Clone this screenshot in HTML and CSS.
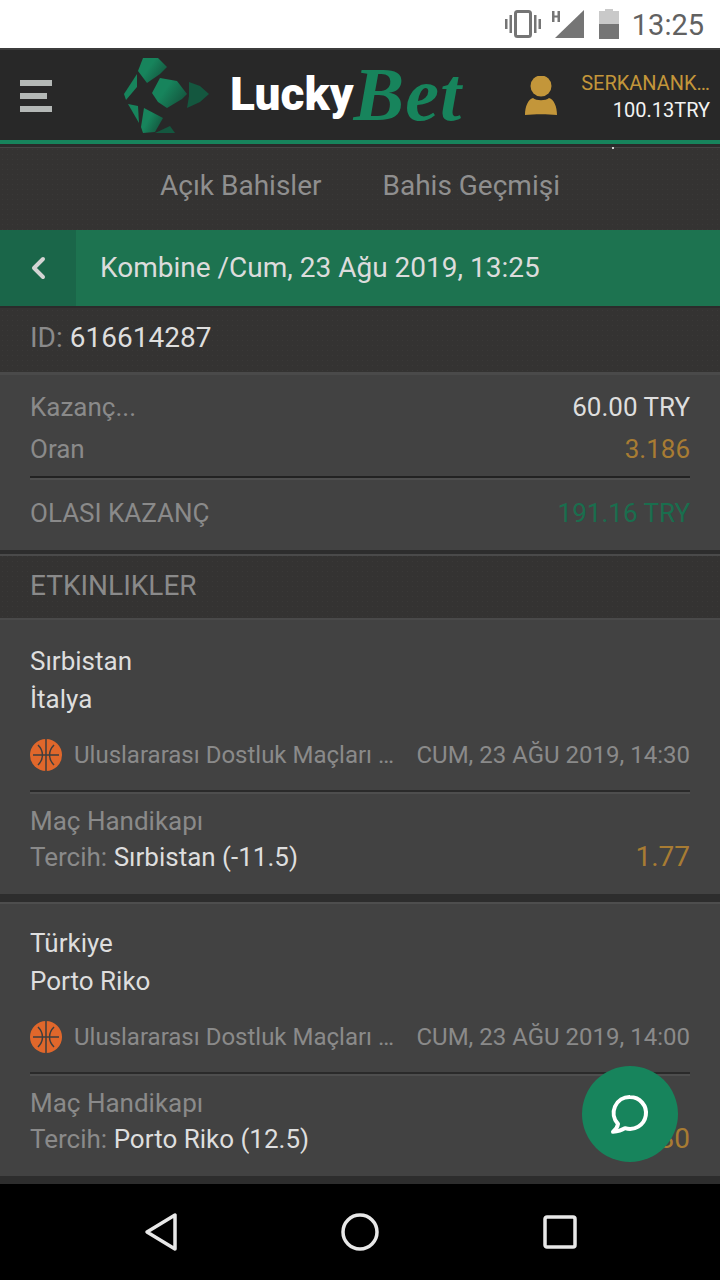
FILE: index.html
```html
<!DOCTYPE html>
<html lang="en">
<head>
  <meta charset="UTF-8">
  <meta name="viewport" content="width=device-width, initial-scale=1.0">
  <title>Kombine</title>
  <link rel="stylesheet" href="styles.css">
</head>
<body>

  <!-- Android status bar -->
  <div class="status-bar">
    <svg class="icon-vibrate" width="36" height="28" viewBox="0 0 36 28">
      <rect x="10.500" y="1.500" width="15" height="25" rx="2" fill="none" stroke="#757575" stroke-width="3"/>
      <path d="M0 9h2.500v10H0zM4.500 5H7v18H4.500zM29 5h2.500v18H29zM33.500 9H36v10h-2.500z" fill="#757575"/>
    </svg>
    <svg class="icon-signal" width="34" height="30" viewBox="0 0 34 30">
      <path d="M34 1v28H5z" fill="#757575"/>
      <path d="M2 2h2.500v4.500h3V2H10v11H7.500V8.500h-3V13H2z" fill="#757575"/>
    </svg>
    <svg class="icon-battery" width="20" height="30" viewBox="0 0 20 30">
      <path d="M6 0h8v2h6v28H0V2h6z" fill="#c9c9c9"/>
      <path d="M0 15h20v15H0z" fill="#757575"/>
    </svg>
    <span class="clock">13:25</span>
  </div>

  <!-- Header section with logo and user -->
  <header>
    <div class="menu-icon">
      <span></span>
      <span class="short"></span>
      <span></span>
    </div>
    <div class="logo">
      <svg width="86" height="76" viewBox="0 0 86 76">
        <defs>
          <linearGradient id="gemFade" x1="0" y1="0" x2="1" y2="0.6">
            <stop offset="0.45" stop-color="#17845c"/>
            <stop offset="1" stop-color="#14573f"/>
          </linearGradient>
        </defs>
        <path d="M19 0h15l9 9-7 7-13 9-9-12z" fill="url(#gemFade)"/>
        <path d="M13 16v13L2 42l-2-6z" fill="#17845c"/>
        <path d="M36 20l17 3 10 13-5 5-15 9-9-6-6-9z" fill="url(#gemFade)"/>
        <path d="M65 24l11 4 9 8-9 8-13 6 2-12z" fill="#14573f"/>
        <path d="M4 46l10 2 1 17z" fill="#17845c"/>
        <path d="M20 50l19 10-8 14-12 1-2-6z" fill="url(#gemFade)"/>
        <path d="M31 75l15-7 5 7z" fill="#14573f"/>
      </svg>
      <span class="logo-text">Lucky<em>Bet</em></span>
    </div>
    <div class="user">
      <svg class="user-icon" width="32" height="40" viewBox="0 0 32 40">
        <circle cx="16" cy="10" r="10.500" fill="#c3963a"/>
        <path d="M8 22c3 3 13 3 16 0 5 1 8 9 8 17-10-1-22-1-32 0 0-8 3-16 8-17z" fill="#c3963a"/>
      </svg>
      <div class="user-info">
        <span class="user-name">SERKANANK…</span>
        <span class="user-balance">100.13TRY</span>
      </div>
    </div>
  </header>

  <!-- Tabs -->
  <nav class="tabs">
    <span class="tab-dot"></span>
    <a href="#">Açık Bahisler</a>
    <a href="#">Bahis Geçmişi</a>
  </nav>

  <main>
    <div class="title-bar">
      <div class="back-button">
        <svg width="16" height="24" viewBox="0 0 16 24">
          <path d="M13 3L4 12l9 9" fill="none" stroke="#d4d4d4" stroke-width="4" stroke-linecap="round" stroke-linejoin="round"/>
        </svg>
      </div>
      <h1>Kombine /Cum, 23 Ağu 2019, 13:25</h1>
    </div>

    <div class="section-head id-row"><span class="muted">ID:</span> <span class="light">616614287</span></div>

    <!-- Totals -->
    <section class="summary">
      <div class="row row-first">
        <span class="muted">Kazanç...</span>
        <span class="light">60.00 TRY</span>
      </div>
      <div class="row row-odds">
        <span class="muted">Oran</span>
        <span class="gold">3.186</span>
      </div>
      <div class="row row-total">
        <span class="muted">OLASI KAZANÇ</span>
        <span class="green">191.16 TRY</span>
      </div>
    </section>

    <div class="section-head events-head"><span class="muted">ETKINLIKLER</span></div>

    <!-- Event cards -->
    <section class="event">
      <div class="team">Sırbistan</div>
      <div class="team">İtalya</div>
      <div class="event-meta">
        <svg class="ball" width="32" height="32" viewBox="0 0 32 32">
          <circle cx="16" cy="16" r="16" fill="#e0672b"/>
          <path d="M16 0v32M3 16h26M8 6c6 6 6 14 0 20M24 6c-6 6-6 14 0 20" fill="none" stroke="#3e3e3e" stroke-width="1.500"/>
        </svg>
        <span class="league">Uluslararası Dostluk Maçları …</span>
        <span class="event-date">CUM, 23 AĞU 2019, 14:30</span>
      </div>
      <div class="market">Maç Handikapı</div>
      <div class="row pick">
        <span><span class="muted">Tercih:</span> <span class="light">Sırbistan (-11.5)</span></span>
        <span class="gold odd">1.77</span>
      </div>
    </section>

    <section class="event">
      <div class="team">Türkiye</div>
      <div class="team">Porto Riko</div>
      <div class="event-meta">
        <svg class="ball" width="32" height="32" viewBox="0 0 32 32">
          <circle cx="16" cy="16" r="16" fill="#e0672b"/>
          <path d="M16 0v32M3 16h26M8 6c6 6 6 14 0 20M24 6c-6 6-6 14 0 20" fill="none" stroke="#3e3e3e" stroke-width="1.500"/>
        </svg>
        <span class="league">Uluslararası Dostluk Maçları …</span>
        <span class="event-date">CUM, 23 AĞU 2019, 14:00</span>
      </div>
      <div class="market">Maç Handikapı</div>
      <div class="row pick">
        <span><span class="muted">Tercih:</span> <span class="light">Porto Riko (12.5)</span></span>
        <span class="gold odd">1.80</span>
      </div>
    </section>
  </main>

  <!-- Floating chat button -->
  <button class="chat-button">
    <svg width="40" height="40" viewBox="0 0 40 40">
      <path d="M20 3a16 16 0 1 1-5 31.200c-3 2-7 3.300-12 3.600 2.500-2 4.500-4.500 5-7.800A16 16 0 0 1 20 3z" fill="none" stroke="#fff" stroke-width="4" stroke-linejoin="round"/>
    </svg>
  </button>

  <!-- Android navigation bar -->
  <div class="nav-bar">
    <svg width="34" height="40" viewBox="0 0 34 40">
      <path d="M32 3v34L4 20z" fill="none" stroke="#e8e8e8" stroke-width="3.500" stroke-linejoin="round"/>
    </svg>
    <svg width="40" height="40" viewBox="0 0 40 40">
      <circle cx="20" cy="20" r="17" fill="none" stroke="#e8e8e8" stroke-width="3.500"/>
    </svg>
    <svg width="34" height="34" viewBox="0 0 34 34">
      <rect x="2" y="2" width="30" height="30" rx="2" fill="none" stroke="#e8e8e8" stroke-width="3.500"/>
    </svg>
  </div>
</body>
</html>
```

FILE: styles.css
```css
/* Reset some default styles */
* {
  margin: 0;
  padding: 0;
  box-sizing: border-box;
}

body {
  font-family: Roboto, Arial, sans-serif;
  background-color: #424242;
  color: #e0e0e0;
  width: 720px;
  height: 1280px;
  overflow: hidden;
  position: relative;
  display: flex;
  flex-direction: column;
}

/* Status bar */
.status-bar {
  height: 48px;
  background-color: #fff;
  display: flex;
  align-items: center;
  justify-content: flex-end;
  padding-right: 16px;
  flex-shrink: 0;
}

.icon-vibrate {
  margin-right: 9px;
}

.icon-signal {
  margin-right: 15px;
}

.icon-battery {
  margin-right: 13px;
}

.clock {
  color: #616161;
  font-size: 29px;
  margin-top: 2px;
}

/* Header */
header {
  height: 96px;
  background-color: #282828;
  border-top: 2px solid #3c3c3c;
  border-bottom: 4px solid #17845c;
  padding: 2px 10px 0 20px;
  display: flex;
  align-items: center;
  flex-shrink: 0;
}

.menu-icon {
  width: 32px;
  display: flex;
  flex-direction: column;
  gap: 7px;
}

.menu-icon span {
  display: block;
  height: 6px;
  background-color: #b4b8b6;
}

.menu-icon .short {
  width: 27px;
}

.logo {
  display: flex;
  align-items: center;
  margin-left: 72px;
}

.logo-text {
  color: #fff;
  font-size: 46px;
  font-weight: 900;
  line-height: 1;
  margin: 0 0 4px 20px;
}

.logo-text em {
  font-family: "Liberation Serif", serif;
  font-size: 76px;
  font-weight: 700;
  line-height: 0;
  vertical-align: -10px;
  color: #17845c;
  letter-spacing: 1px;
}

.user {
  margin-left: auto;
  display: flex;
  align-items: center;
}

.user-icon {
  margin-right: 24px;
}

.user-info {
  display: flex;
  flex-direction: column;
  align-items: flex-end;
  gap: 3px;
  font-size: 20px;
}

.user-name {
  color: #c3963a;
}

.user-balance {
  color: #f2f2f2;
}

/* Tabs */
.tabs {
  height: 86px;
  background-color: #343332;
  background-image: radial-gradient(circle, #3a3938 0.7px, transparent 0.9px);
  background-size: 5px 5px;
  border-top: 3px solid #2b2b2b;
  box-shadow: inset 0 1px 0 #454545;
  padding-bottom: 7px;
  display: flex;
  justify-content: center;
  align-items: center;
  gap: 61px;
  flex-shrink: 0;
  position: relative;
}

.tabs a {
  color: #8f8f8f;
  font-size: 28px;
  text-decoration: none;
}

/* Tiny speck that sits on the divider */
.tab-dot {
  position: absolute;
  left: 612px;
  top: 0;
  width: 2px;
  height: 2px;
  background-color: #d0d0d0;
}

/* Page content */
main {
  flex: 1;
  overflow: hidden;
}

.title-bar {
  height: 76px;
  background-color: #1d7350;
  display: flex;
  align-items: center;
}

.back-button {
  width: 76px;
  height: 100%;
  background-color: #1a6649;
  display: flex;
  align-items: center;
  justify-content: center;
}

.title-bar h1 {
  color: #dcdcdc;
  font-size: 28px;
  font-weight: 400;
  margin: 0 0 2px 24px;
}

.section-head {
  background-color: #343332;
  background-image: radial-gradient(circle, #3a3938 0.7px, transparent 0.9px);
  background-size: 5px 5px;
  padding: 0 30px;
  display: flex;
  align-items: center;
  font-size: 28px;
}

.id-row {
  height: 69px;
  gap: 7px;
  border-top: 2px solid #2b2b2b;
  border-bottom: 3px solid #4a4a4a;
  padding-bottom: 5px;
}

.events-head {
  height: 70px;
  border-top: 4px solid #2d2d2d;
  border-bottom: 2px solid #4a4a4a;
  box-shadow: inset 0 2px 0 #4a4a4a;
  padding-bottom: 2px;
}

.muted {
  color: #8a8a8a;
}

.light {
  color: #dedede;
}

.gold {
  color: #a87c33;
}

.green {
  color: #1a6e4e;
}

.row {
  display: flex;
  justify-content: space-between;
  align-items: center;
}

.summary {
  padding: 11px 30px 0;
  height: 175px;
  font-size: 26px;
}

.row-first {
  height: 42px;
}

.row-odds {
  height: 50px;
  padding-bottom: 6px;
  border-bottom: 2px solid #222;
  box-shadow: 0 2px 0 #4e4e4e;
}

.row-total {
  height: 70px;
}

/* Event card */
.event {
  height: 282px;
  padding: 22px 30px 0;
  border-bottom: 8px solid #2d2d2d;
}

.event + .event {
  box-shadow: inset 0 2px 0 #4e4e4e;
}

.team {
  color: #dedede;
  font-size: 26px;
  height: 38px;
  line-height: 38px;
}

.event-meta {
  display: flex;
  align-items: center;
  height: 74px;
  padding-top: 2px;
  border-bottom: 2px solid #2a2a2a;
  box-shadow: 0 2px 0 #4e4e4e;
  font-size: 24px;
  color: #8a8a8a;
}

.ball {
  margin-right: 12px;
  flex-shrink: 0;
}

.event-date {
  margin-left: auto;
}

.market {
  color: #8a8a8a;
  font-size: 26px;
  margin-top: 14px;
}

.pick {
  font-size: 26px;
  margin-top: 4px;
}

.odd {
  font-size: 28px;
}

/* Chat button */
.chat-button {
  position: absolute;
  left: 582px;
  top: 1066px;
  width: 96px;
  height: 96px;
  border: none;
  border-radius: 50%;
  background-color: #17845c;
  display: flex;
  align-items: center;
  justify-content: center;
}

/* Bottom navigation */
.nav-bar {
  height: 96px;
  background-color: #000;
  flex-shrink: 0;
  display: flex;
  justify-content: space-between;
  align-items: center;
  padding: 0 143px;
}
```
